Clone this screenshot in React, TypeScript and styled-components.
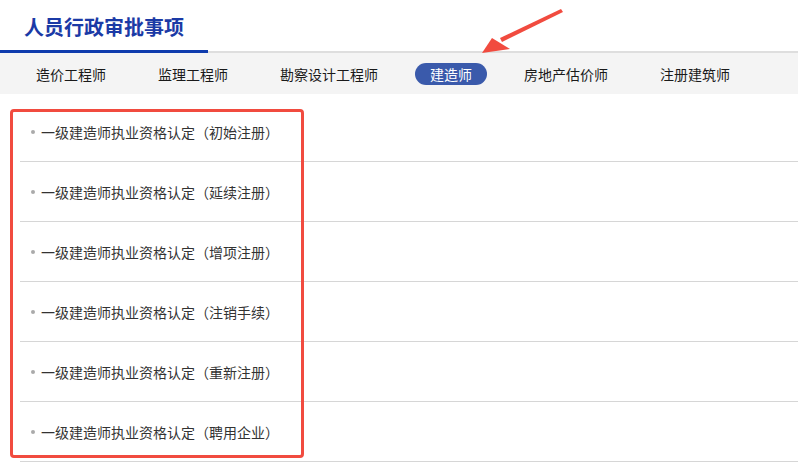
import React from 'react';
import styled, { createGlobalStyle } from 'styled-components';

const GlobalStyle = createGlobalStyle`
  body {
    margin: 0;
    background: #fff;
    font-family: "Noto Sans CJK SC", "Noto Sans", sans-serif;
  }
`;

const Page = styled.div`
  position: relative;
  width: 798px;
  height: 470px;
  overflow: hidden;
`;

const Header = styled.div`
  display: flex;
  align-items: flex-end;
  height: 51px;
  border-bottom: 2px solid #dedede;
`;

const TitleBox = styled.div`
  width: 208px;
  height: 50px;
  box-sizing: border-box;
  padding-left: 24px;
  border-bottom: 3px solid #0f3bad;
  margin-bottom: -2px;
  display: flex;
  align-items: center;
`;

const Title = styled.h1`
  margin: 0;
  font-size: 20px;
  font-weight: 700;
  color: #1b3aa6;
`;

const TabBar = styled.div`
  display: flex;
  align-items: center;
  height: 41px;
  padding-left: 21px;
  gap: 22px;
  background: #f4f4f4;
`;

const Tab = styled.div<{ $active?: boolean }>`
  height: 22px;
  line-height: 22px;
  padding: 0 15px;
  border-radius: 11px;
  font-size: 14px;
  color: ${p => (p.$active ? '#fff' : '#1a1a1a')};
  background: ${p => (p.$active ? '#3a5aab' : 'transparent')};
  white-space: nowrap;
`;

const List = styled.ul`
  list-style: none;
  margin: 0 0 0 20px;
  padding: 8px 0 0;
`;

const Row = styled.li`
  display: flex;
  align-items: center;
  gap: 6px;
  height: 59px;
  padding-left: 11px;
  border-bottom: 1px solid #d6d6d6;
  font-size: 14px;
  color: #333;
`;

const Dot = styled.span`
  width: 4px;
  height: 4px;
  border-radius: 50%;
  background: #aaa;
`;

const Highlight = styled.div`
  position: absolute;
  left: 10px;
  top: 109px;
  width: 294px;
  height: 349px;
  box-sizing: border-box;
  border: 3px solid #f14b3f;
  border-radius: 4px;
  pointer-events: none;
`;

const Arrow = styled.svg`
  position: absolute;
  left: 470px;
  top: 0;
  pointer-events: none;
`;

const tabs = ['造价工程师', '监理工程师', '勘察设计工程师', '建造师', '房地产估价师', '注册建筑师'];
const items = ['初始注册', '延续注册', '增项注册', '注销手续', '重新注册', '聘用企业'];

export default function App() {
  return (
    <Page>
      <GlobalStyle />
      <Header>
        <TitleBox>
          <Title>人员行政审批事项</Title>
        </TitleBox>
      </Header>
      <TabBar>
        {tabs.map(t => (
          <Tab key={t} $active={t === '建造师'}>
            {t}
          </Tab>
        ))}
      </TabBar>
      <List>
        {items.map(i => (
          <Row key={i}>
            <Dot />
            一级建造师执业资格认定（{i}）
          </Row>
        ))}
      </List>
      <Highlight />
      <Arrow width="100" height="60" viewBox="0 0 100 60">
        <path d="M91 9 L30 38 L32 42 L93 12 Z" fill="#f14b3f" />
        <path d="M12 53 L22 38 L40 49 Z" fill="#f14b3f" />
      </Arrow>
    </Page>
  );
}
